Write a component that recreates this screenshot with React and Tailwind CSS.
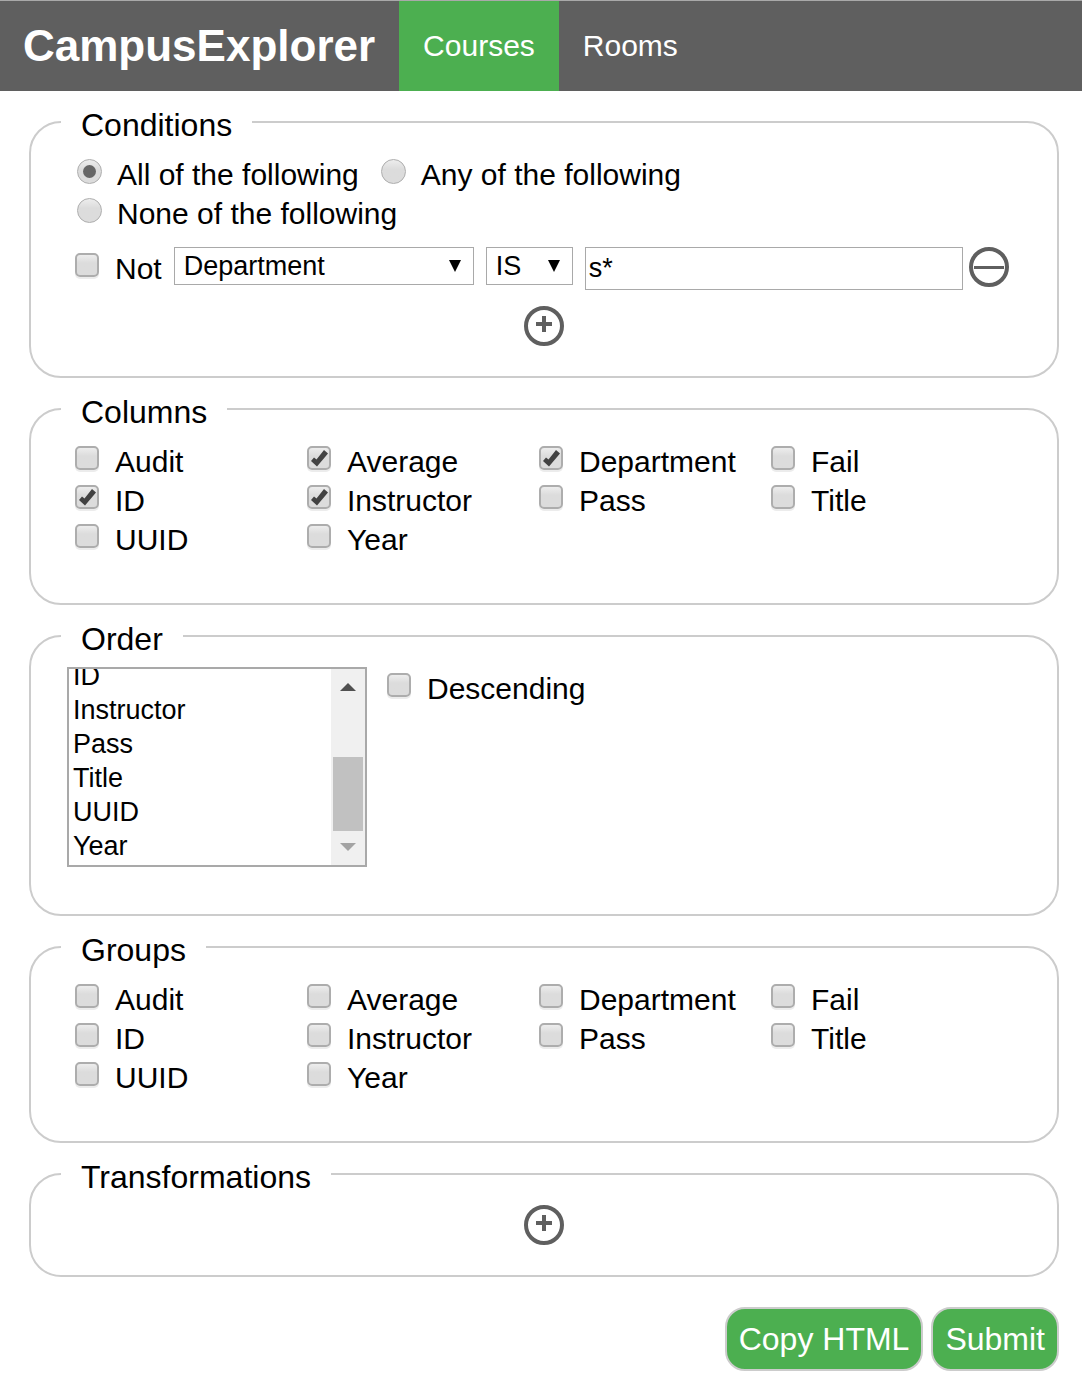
import { useEffect, useRef } from "react";

const FIELDS = [
  "Audit",
  "Average",
  "Department",
  "Fail",
  "ID",
  "Instructor",
  "Pass",
  "Title",
  "UUID",
  "Year",
];

function Checkbox({ label, checked = false }) {
  return (
    <label className="flex items-start gap-4">
      <span className="relative mt-1 size-6 shrink-0">
        <input
          type="checkbox"
          defaultChecked={checked}
          className="peer block size-6 appearance-none rounded-[5px] border-2 border-[#adadad] bg-linear-to-b from-[#ededed] to-[#dcdcdc] to-40% shadow-[0_2px_0_#ececec]"
        />
        <svg
          viewBox="0 0 24 24"
          className="pointer-events-none absolute inset-0 hidden size-6 peer-checked:block"
          aria-hidden="true"
        >
          <path d="M17 4l4 3.500L10 20.500 4 15l3-3.500 2.500 2z" fill="#424242" />
        </svg>
      </span>
      <span>{label}</span>
    </label>
  );
}

function Radio({ label, checked = false }) {
  return (
    <label className="flex items-start gap-[15px]">
      <span className="relative mt-1 size-[25px] shrink-0">
        <input
          type="radio"
          name="match"
          defaultChecked={checked}
          className="peer block size-[25px] appearance-none rounded-full border border-[#adadad] bg-linear-to-b from-[#ededed] to-[#dcdcdc] to-40%"
        />
        <span className="pointer-events-none absolute inset-0 m-auto hidden size-[13px] rounded-full bg-[#666666] peer-checked:block" />
      </span>
      <span>{label}</span>
    </label>
  );
}

function Panel({ title, className, children }) {
  return (
    <fieldset className={`min-w-0 rounded-[32px] border-2 border-[#cccccc] px-[30px] ${className}`}>
      <legend className="px-5 pt-[6px] text-[32px] leading-9">{title}</legend>
      {children}
    </fieldset>
  );
}

function FieldGrid({ checked = [] }) {
  return (
    <div className="grid grid-cols-[repeat(auto-fill,232px)] pl-[14px]">
      {FIELDS.map((name) => (
        <Checkbox key={name} label={name} checked={checked.includes(name)} />
      ))}
    </div>
  );
}

function Dropdown({ label, options, className }) {
  return (
    <span className={`relative ${className}`}>
      <select
        aria-label={label}
        className="block h-[38px] w-full appearance-none border border-[#a9a9a9] bg-white pr-8 pb-[1px] pl-[9px] text-[27px] leading-8"
      >
        {options.map((option) => (
          <option key={option}>{option}</option>
        ))}
      </select>
      <svg
        viewBox="0 0 12 12"
        className="pointer-events-none absolute top-[13px] right-[13px] size-3"
        aria-hidden="true"
      >
        <path d="M0 0h12L6 12z" fill="#000" />
      </svg>
    </span>
  );
}

function AddButton({ label }) {
  return (
    <button type="button" aria-label={label} className="mx-auto block size-10">
      <svg viewBox="0 0 40 40" className="size-10" fill="none" stroke="#5f5f5f" aria-hidden="true">
        <circle cx="20" cy="20" r="18" strokeWidth="4" />
        <path d="M12 18h16M20 10v16" strokeWidth="4" />
      </svg>
    </button>
  );
}

function OrderList() {
  const list = useRef(null);
  useEffect(() => {
    list.current.scrollTop = list.current.scrollHeight;
  }, []);
  return (
    <div className="flex h-[200px] w-[300px] border-2 border-[#a9a9a9]">
      <select
        ref={list}
        multiple
        aria-label="Order by"
        className="h-full min-w-0 flex-1 overflow-y-scroll p-0 text-[27px] leading-8 [scrollbar-width:none]"
      >
        {FIELDS.map((name) => (
          <option key={name} className="h-[34px] px-1 pt-0 pb-[2px]">
            {name}
          </option>
        ))}
      </select>
      <div className="flex w-[34px] flex-col items-center bg-[#f0f0f0]" aria-hidden="true">
        <svg viewBox="0 0 34 34" className="size-[34px]">
          <path d="M9 22l8-8 8 8z" fill="#505050" />
        </svg>
        <div className="mt-auto h-[74px] w-[30px] bg-[#c1c1c1]" />
        <svg viewBox="0 0 34 34" className="size-[34px]">
          <path d="M9 12h16l-8 8z" fill="#a3a3a3" />
        </svg>
      </div>
    </div>
  );
}

export default function App() {
  return (
    <div className="bg-white font-['Liberation_Sans',Arial,sans-serif] text-[30px] leading-[39px] text-black">
      <nav className="flex h-[91px] items-stretch border-t border-[#a9a9a9] bg-[#5f5f5f] text-white">
        <h1 className="flex items-center pr-6 pb-[2px] pl-[23px] text-[44px] font-bold">CampusExplorer</h1>
        <a href="#courses" className="flex items-center bg-[#4caf50] px-6 pb-[2px]">
          Courses
        </a>
        <a href="#rooms" className="flex items-center px-6 pb-[2px]">
          Rooms
        </a>
      </nav>

      <form
        className="flex flex-col gap-[10px] pt-[10px] pr-[23px] pb-[7px] pl-[29px]"
        onSubmit={(event) => event.preventDefault()}
      >
        <Panel title="Conditions" className="pt-3 pb-[30px]">
          <div className="flex flex-wrap gap-x-[22px] pr-[18px] pl-4">
            <Radio label="All of the following" checked />
            <Radio label="Any of the following" />
            <Radio label="None of the following" />
          </div>
          <div className="mt-[14px] flex items-start pr-[18px] pl-[14px]">
            <div className="mt-[2px] mr-3">
              <Checkbox label="Not" />
            </div>
            <Dropdown
              label="Field"
              options={["Department", ...FIELDS.filter((name) => name !== "Department")]}
              className="mr-3 w-[300px]"
            />
            <Dropdown label="Operator" options={["IS", "EQ", "GT", "LT"]} className="mr-3 w-[87px]" />
            <input
              type="text"
              aria-label="Value"
              defaultValue="s*"
              className="mr-[6px] h-[43px] min-w-0 flex-1 border border-[#a9a9a9] px-[3px] text-[27px]"
            />
            <button type="button" aria-label="Remove condition" className="size-10">
              <svg viewBox="0 0 40 40" className="size-10" fill="none" stroke="#5f5f5f" aria-hidden="true">
                <circle cx="20" cy="20" r="18" strokeWidth="4" />
                <path d="M5 20.500h30" strokeWidth="3" />
              </svg>
            </button>
          </div>
          <div className="mt-4">
            <AddButton label="Add condition" />
          </div>
        </Panel>

        <Panel title="Columns" className="pt-3 pb-11">
          <FieldGrid checked={["Average", "Department", "ID", "Instructor"]} />
        </Panel>

        <Panel title="Order" className="pt-[10px] pb-[47px]">
          <div className="flex items-start gap-5 pl-[6px]">
            <OrderList />
            <div className="mt-[2px]">
              <Checkbox label="Descending" />
            </div>
          </div>
        </Panel>

        <Panel title="Groups" className="pt-3 pb-11">
          <FieldGrid />
        </Panel>

        <Panel title="Transformations" className="pt-[10px] pb-[30px]">
          <AddButton label="Add transformation" />
        </Panel>

        <div className="mt-5 flex justify-end gap-2 text-[32px] text-white">
          <button type="button" className="h-16 rounded-[20px] border-2 border-[#cccccc] bg-[#4caf50] px-3">
            Copy HTML
          </button>
          <button type="submit" className="h-16 rounded-[20px] border-2 border-[#cccccc] bg-[#4caf50] px-3">
            Submit
          </button>
        </div>
      </form>
    </div>
  );
}
